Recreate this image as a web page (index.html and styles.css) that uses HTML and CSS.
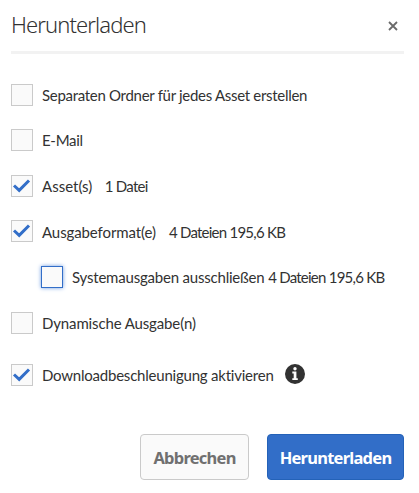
FILE: index.html
```
<!DOCTYPE html>
<html lang="de">
<head>
<meta charset="utf-8">
<title>Herunterladen</title>
<link rel="stylesheet" href="styles.css">
</head>
<body>
<main class="dialog">
  <header class="header">
    <h1 class="title">Herunterladen</h1>
    <svg class="close" viewBox="0 0 10 10"><path d="M1 1L9 9M9 1L1 9"/></svg>
  </header>
  <div class="options">
    <label class="row"><span class="box"></span><span class="text folder">Separaten Ordner für jedes Asset erstellen</span></label>
    <label class="row"><span class="box"></span><span class="text mail">E-Mail</span></label>
    <label class="row"><span class="box"><svg class="check" viewBox="0 0 20 20"><path d="M2 9.5L7.2 14.3L17 4.5"/></svg></span><span class="text asset">Asset(s)</span><span class="text count">1 Datei</span></label>
    <label class="row"><span class="box"><svg class="check" viewBox="0 0 20 20"><path d="M2 9.5L7.2 14.3L17 4.5"/></svg></span><span class="text format">Ausgabeformat(e)</span><span class="text size">4 Dateien 195,6 KB</span></label>
    <label class="row nested"><span class="box focused"></span><span class="text system">Systemausgaben ausschließen <span class="amount">4 Dateien 195,6 KB</span></span></label>
    <label class="row"><span class="box"></span><span class="text dynamic">Dynamische Ausgabe(n)</span></label>
    <label class="row speed"><span class="box"><svg class="check" viewBox="0 0 20 20"><path d="M2 9.5L7.2 14.3L17 4.5"/></svg></span><span class="text accel">Downloadbeschleunigung aktivieren</span>
      <svg class="info" viewBox="0 0 20 20"><circle cx="10" cy="10" r="10"/><path d="M7.3 7.6H11.4V14.2H12.8V16H7.3V14.2H8.7V9.4H7.3Z"/><circle class="dot" cx="10" cy="4.7" r="1.7"/></svg></label>
  </div>
  <footer class="footer">
    <button class="button cancel">Abbrechen</button>
    <button class="button primary">Herunterladen</button>
  </footer>
</main>
</body>
</html>
```
FILE: styles.css
```
* { box-sizing: border-box; }
body { margin: 0; background: #fff; color: #323232; font-family: "Noto Sans", sans-serif; }
.dialog { width: 419px; height: 493px; padding: 0 15px 0 11px; overflow: hidden; }
.header { height: 54px; border-bottom: 3px solid #f2f2f2; display: flex; justify-content: space-between; align-items: center; padding-right: 6px; }
.title { margin: 0; font-size: 22px; font-weight: 300; line-height: 48px; padding-bottom: 3px; letter-spacing: -0.9px; white-space: nowrap; color: #323232; }
.close { width: 10px; height: 10px; stroke: #6a6a6a; stroke-width: 1.8; fill: none; }
.options { padding-top: 17.9px; }
.row { display: flex; align-items: center; height: 45.6px; }
.nested { padding-left: 30px; }
.speed { margin-top: 6.5px; }
.box { flex: none; display: block; width: 22px; height: 22px; margin-right: 9px; border: 1px solid #cacaca; background: #fafafa; }
.focused { border-color: #326ec8; box-shadow: 0 0 4px #6d9be0; }
.check { display: block; width: 20px; height: 20px; fill: none; stroke: #326ec8; stroke-width: 3; }
.text { font-family: Lato, sans-serif; font-size: 15px; line-height: 22px; letter-spacing: -0.3px; white-space: nowrap; padding-top: 0.4px; }
.asset { letter-spacing: 0; }
.count { letter-spacing: -0.75px; margin-left: 12.5px; }
.format { letter-spacing: -0.1px; }
.size { letter-spacing: -0.75px; margin-left: 13px; }
.system { letter-spacing: -0.2px; }
.amount { letter-spacing: -0.75px; }
.dynamic { letter-spacing: -0.13px; }
.accel { letter-spacing: -0.22px; }
.info { width: 20px; height: 20px; margin: 0 0 2px 11px; fill: #323232; }
.info path, .info .dot { fill: #fff; }
.footer { display: flex; justify-content: flex-end; gap: 18px; margin-top: 36.6px; }
.button { height: 46px; padding: 0; border: 1px solid #cacaca; border-radius: 4px; background: #fafafa; color: #707070; font: 700 16.5px "Noto Sans", sans-serif; letter-spacing: -0.75px; }
.cancel { width: 109px; }
.primary { width: 137px; background: #326ec8; border-color: #2462b8; color: #fff; }
```
